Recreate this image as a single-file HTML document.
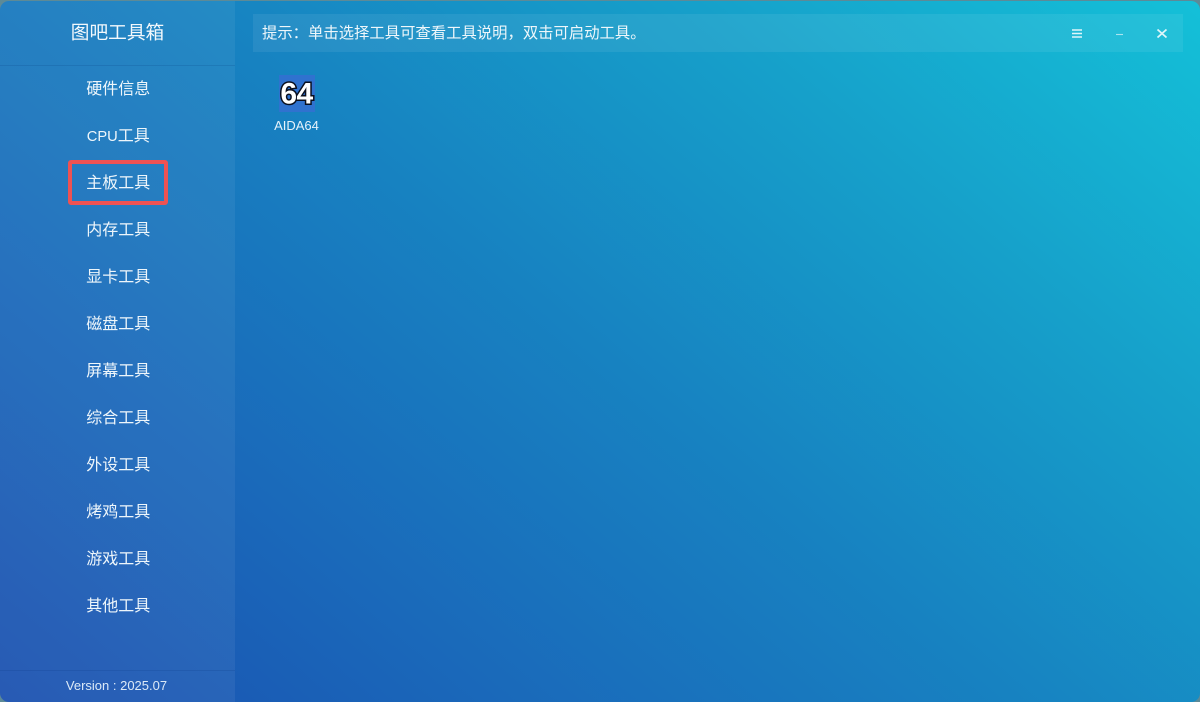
<!DOCTYPE html>
<html lang="zh-CN">
<head>
<meta charset="utf-8">
<title>图吧工具箱</title>
<style>
html,body{margin:0;padding:0;width:1200px;height:702px;overflow:hidden;background:#5d8a97;}
body{font-family:"Liberation Sans","Noto Sans CJK SC",sans-serif;color:#fff;position:relative;}
#win{position:absolute;left:0;top:1px;width:1200px;height:701px;border-radius:9px;overflow:hidden;background:linear-gradient(40deg,#1b50b0 0%,#1a69ba 25%,#1782c1 50%,#16a0ca 75%,#14c0d8 100%);}
#side{position:absolute;left:0;top:-1px;width:235px;height:702px;background:rgba(255,255,255,.06);}
.title{position:absolute;left:0;top:0;width:235px;height:65px;line-height:65px;text-align:center;font-size:18.7px;color:#f2f8fc;}
.rule{position:absolute;left:0;width:235px;height:1px;background:rgba(0,40,110,.14);}
.item{position:absolute;left:0;width:235px;text-align:center;font-size:16px;line-height:24px;color:#eef6fb;padding-left:1.5px;box-sizing:border-box;}
.item span{font-size:14.7px;}
.ver{position:absolute;left:0;top:677px;width:233px;text-align:center;font-size:13px;line-height:18px;color:#dbe9f7;}
#mark{position:absolute;left:68px;top:160px;width:100px;height:45px;box-sizing:border-box;border:4px solid #ee5253;border-radius:3px;}
#bar{position:absolute;left:253px;top:14px;width:930px;height:38px;background:rgba(255,255,255,.07);}
#tip{position:absolute;left:9px;top:1px;line-height:38px;font-size:15.35px;color:#eef7fb;white-space:nowrap;}
#app{position:absolute;left:279px;top:75px;width:36px;height:37px;background:#2f72cf;}
#app svg{position:absolute;left:0;top:0;}
#lab{position:absolute;left:256px;top:117px;width:81px;text-align:center;font-size:13px;line-height:17px;color:#e6f2fa;}
</style>
</head>
<body>
<div id="win">
<div id="side">
<div class="title">图吧工具箱</div>
<div class="rule" style="top:65px"></div>
<div class="item" style="top:78px">硬件信息</div>
<div class="item" style="top:125px"><span>CPU</span>工具</div>
<div class="item" style="top:172px">主板工具</div>
<div class="item" style="top:219px">内存工具</div>
<div class="item" style="top:266px">显卡工具</div>
<div class="item" style="top:313px">磁盘工具</div>
<div class="item" style="top:360px">屏幕工具</div>
<div class="item" style="top:407px">综合工具</div>
<div class="item" style="top:454px">外设工具</div>
<div class="item" style="top:501px">烤鸡工具</div>
<div class="item" style="top:548px">游戏工具</div>
<div class="item" style="top:595px">其他工具</div>
<div class="rule" style="top:670px"></div>
<div class="ver">Version : 2025.07</div>
<div id="mark"></div>
</div>
</div>
<div id="bar"><div id="tip">提示：单击选择工具可查看工具说明，双击可启动工具。</div></div>
<svg style="position:absolute;left:1060px;top:20px" width="120" height="26" viewBox="0 0 120 26" fill="none" stroke="#dff6fa">
<path d="M12 10H22M12 13.500H22M12 17H22" stroke-width="1.400"/>
<path d="M56 14.500H63" stroke-width="1.100" stroke="#a9e4ef"/>
<path d="M97.500 9.500L106.500 17.500M106.500 9.500L97.500 17.500" stroke-width="1.800"/>
</svg>
<div id="app">
<svg width="36" height="37" viewBox="0 0 36 37">
<text x="17.500" y="28.500" text-anchor="middle" font-family="Liberation Sans" font-weight="700" font-size="30" fill="#fff" stroke="#0a0f1e" stroke-width="3" paint-order="stroke" letter-spacing="-0.500">64</text>
</svg>
</div>
<div id="lab">AIDA64</div>
</body>
</html>
